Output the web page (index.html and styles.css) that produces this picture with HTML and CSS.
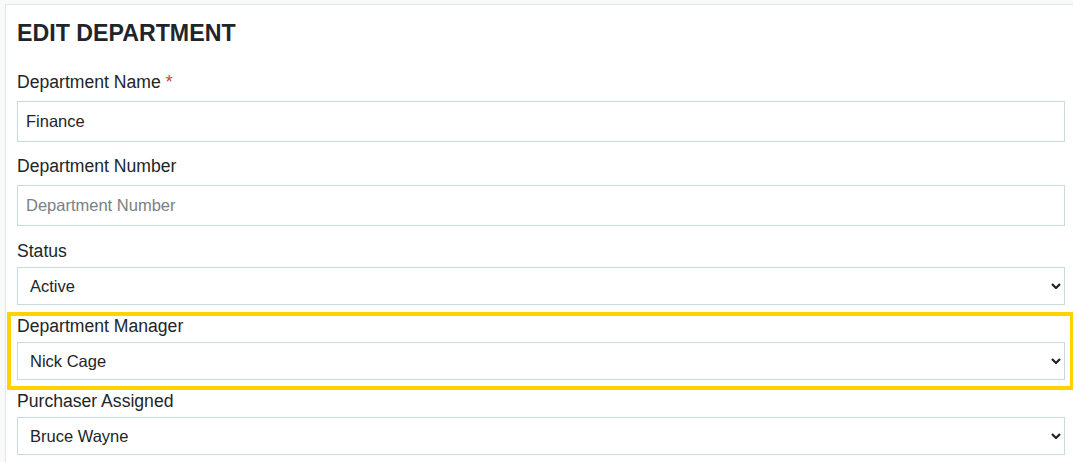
FILE: index.html
```html
<!DOCTYPE html>
<html lang="en">
<head>
<meta charset="utf-8">
<title>Edit Department</title>
<link rel="stylesheet" href="styles.css">
</head>
<body>
<div class="card">
  <h1 class="title">EDIT DEPARTMENT</h1>

  <div class="group group-input">
    <label class="label" for="dname">Department Name <span class="req">*</span></label>
    <input class="control" id="dname" type="text" value="Finance">
  </div>

  <div class="group group-input group-gap">
    <label class="label" for="dnum">Department Number</label>
    <input class="control" id="dnum" type="text" placeholder="Department Number">
  </div>

  <div class="group group-select">
    <label class="label" for="status">Status</label>
    <div class="select-wrap">
      <select class="control select" id="status"><option>Active</option><option>Inactive</option></select>
      <svg class="chev" viewBox="0 0 10 6" width="10" height="6"><path d="M1 1 L5 5 L9 1" fill="none" stroke="#222" stroke-width="2.2"/></svg>
    </div>
  </div>

  <div class="group group-select highlighted">
    <label class="label" for="mgr">Department Manager</label>
    <div class="select-wrap">
      <select class="control select" id="mgr"><option>Nick Cage</option></select>
      <svg class="chev" viewBox="0 0 10 6" width="10" height="6"><path d="M1 1 L5 5 L9 1" fill="none" stroke="#222" stroke-width="2.2"/></svg>
    </div>
  </div>

  <div class="group group-select group-last">
    <label class="label" for="pur">Purchaser Assigned</label>
    <div class="select-wrap">
      <select class="control select" id="pur"><option>Bruce Wayne</option></select>
      <svg class="chev" viewBox="0 0 10 6" width="10" height="6"><path d="M1 1 L5 5 L9 1" fill="none" stroke="#222" stroke-width="2.2"/></svg>
    </div>
  </div>
</div>
</body>
</html>
```
FILE: styles.css
```css
* { box-sizing: border-box; }
html { overflow: hidden; }
body {
  margin: 0;
  background: #f8f9f9;
  font-family: "Liberation Sans", Arial, sans-serif;
  color: #212529;
  padding: 4px 0 0 5px;
}
.card {
  width: 1072px;
  background: #fff;
  border: 1px solid #e2e8ea;
  border-right: 0;
  border-bottom: 0;
  padding: 15px 11px 10px 11px;
}
.title {
  margin: 0 0 22px 0;
  font-size: 23.2px;
  line-height: 27px;
  font-weight: bold;
  color: #212529;
}
.group { display: flex; flex-direction: column; position: relative; }
.label {
  display: block;
  font-size: 17.6px;
  line-height: 26px;
  color: #212529;
}
.req { color: #e0352f; }
.group-input .label { margin-bottom: 6px; }
.group-input { margin-bottom: 11px; }
.group-gap { margin-bottom: 12px; }
.group-select .label { margin-bottom: 3px; }
.group-select { margin-bottom: 8px; }
.group-last { margin-bottom: 0; }
.control {
  display: block;
  width: 1048px;
  height: 41px;
  border: 1px solid #c9dadf;
  border-radius: 0;
  background: #fff;
  font-family: "Liberation Sans", Arial, sans-serif;
  font-size: 16.5px;
  color: #212529;
  padding: 0 8px;
  outline: none;
}
.control::placeholder { color: #7b8086; }
.select-wrap { position: relative; width: 1048px; }
.select {
  -webkit-appearance: none;
  appearance: none;
  height: 38px;
  padding: 0 30px 0 12px;
}
.chev {
  position: absolute;
  right: 4px;
  top: 16px;
  pointer-events: none;
}
.highlighted::after {
  content: "";
  position: absolute;
  left: -10px;
  right: -8px;
  top: -1px;
  bottom: -10px;
  border: 4px solid #ffd200;
  pointer-events: none;
}
```
